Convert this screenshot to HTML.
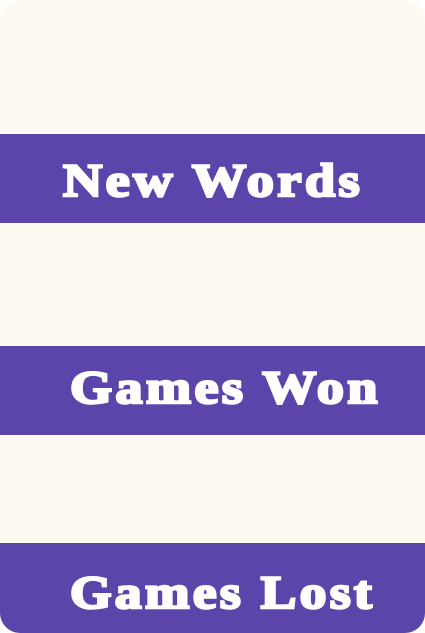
<!DOCTYPE html>
<html><head><style>
html,body{margin:0;padding:0;background:#fff}
.c{position:relative;width:425px;height:633px;background:#fefaf2;border-radius:20px;overflow:hidden}
.b{position:absolute;left:0;width:425px;background:#5b45ab}
.t{position:absolute;color:#fff;font-family:"Liberation Serif",serif;font-weight:bold;font-size:47px;line-height:47px;white-space:nowrap;-webkit-text-stroke:2.5px #fff;letter-spacing:3px;transform-origin:0 50%}
</style></head><body><div class="c">
<div class="b" style="top:134px;height:89px"></div>
<div class="b" style="top:346px;height:89px"></div>
<div class="b" style="top:543px;height:90px"></div>
<div class="t" style="left:63px;top:158px;transform:scaleX(1.155)">New Words</div>
<div class="t" style="left:70px;top:365px;transform:scaleX(1.15)">Games Won</div>
<div class="t" style="left:70px;top:570px;transform:scaleX(1.135)">Games Lost</div>
</div></body></html>
